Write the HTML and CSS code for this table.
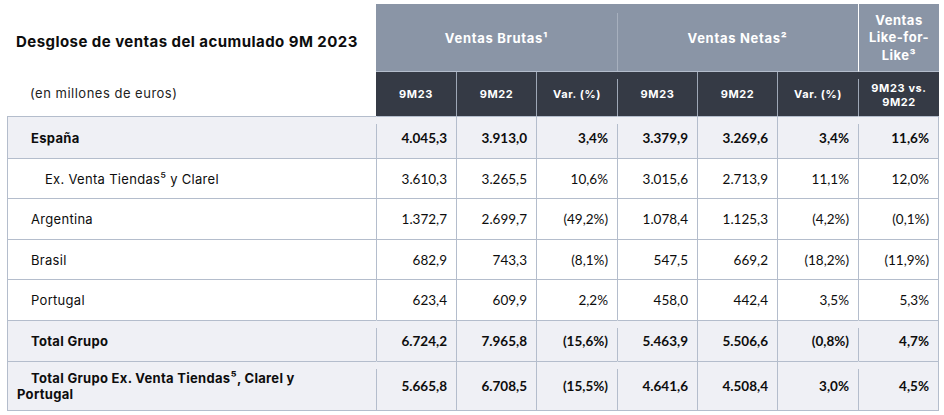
FILE: index.html
```html
<!DOCTYPE html>
<html lang="es">
<head>
<meta charset="utf-8">
<title>Desglose de ventas 9M 2023</title>
<link rel="stylesheet" href="styles.css">
</head>
<body>
<div class="sheet">
  <div class="title">Desglose de ventas del acumulado 9M 2023</div>
  <div class="grp">Ventas Brutas¹</div>
  <div class="grp grp-cut">Ventas Netas²</div>
  <div class="grp grp-lfl">Ventas<br>Like-for-<br>Like³</div>

  <div class="units">(en millones de euros)</div>
  <div class="sub">9M23</div>
  <div class="sub">9M22</div>
  <div class="sub">Var. (%)</div>
  <div class="sub sub-cut">9M23</div>
  <div class="sub">9M22</div>
  <div class="sub">Var. (%)</div>
  <div class="sub sub-cut sub-two">9M23 vs.<br>9M22</div>

  <div class="lab shade bold">España</div>
  <div class="num shade bold cut">4.045,3</div>
  <div class="num shade bold">3.913,0</div>
  <div class="num shade bold">3,4%</div>
  <div class="num shade bold cut">3.379,9</div>
  <div class="num shade bold">3.269,6</div>
  <div class="num shade bold">3,4%</div>
  <div class="num shade bold cut last">11,6%</div>

  <div class="lab deep">Ex. Venta Tiendas⁵ y Clarel</div>
  <div class="num">3.610,3</div>
  <div class="num">3.265,5</div>
  <div class="num">10,6%</div>
  <div class="num">3.015,6</div>
  <div class="num">2.713,9</div>
  <div class="num">11,1%</div>
  <div class="num last">12,0%</div>

  <div class="lab">Argentina</div>
  <div class="num">1.372,7</div>
  <div class="num">2.699,7</div>
  <div class="num">(49,2%)</div>
  <div class="num">1.078,4</div>
  <div class="num">1.125,3</div>
  <div class="num">(4,2%)</div>
  <div class="num last">(0,1%)</div>

  <div class="lab">Brasil</div>
  <div class="num">682,9</div>
  <div class="num">743,3</div>
  <div class="num">(8,1%)</div>
  <div class="num">547,5</div>
  <div class="num">669,2</div>
  <div class="num">(18,2%)</div>
  <div class="num last">(11,9%)</div>

  <div class="lab">Portugal</div>
  <div class="num">623,4</div>
  <div class="num">609,9</div>
  <div class="num">2,2%</div>
  <div class="num">458,0</div>
  <div class="num">442,4</div>
  <div class="num">3,5%</div>
  <div class="num last">5,3%</div>

  <div class="lab shade bold">Total Grupo</div>
  <div class="num shade bold cut">6.724,2</div>
  <div class="num shade bold">7.965,8</div>
  <div class="num shade bold">(15,6%)</div>
  <div class="num shade bold cut">5.463,9</div>
  <div class="num shade bold">5.506,6</div>
  <div class="num shade bold">(0,8%)</div>
  <div class="num shade bold cut last">4,7%</div>

  <div class="lab shade bold wrap bottom">Total Grupo Ex. Venta Tiendas⁵, Clarel y<br>Portugal</div>
  <div class="num shade bold cut bottom">5.665,8</div>
  <div class="num shade bold bottom">6.708,5</div>
  <div class="num shade bold bottom">(15,5%)</div>
  <div class="num shade bold cut bottom">4.641,6</div>
  <div class="num shade bold bottom">4.508,4</div>
  <div class="num shade bold bottom">3,0%</div>
  <div class="num shade bold cut last bottom">4,5%</div>
</div>
</body>
</html>
```

FILE: styles.css
```css
:root {
  --line: #b4bdcc;
  --head: #8a95a6;
  --dark: #353a45;
  --shade: #eff0f5;
  --ink: #0d0d0d;
}

* { box-sizing: border-box; }

body {
  margin: 0;
  background: #fff;
  color: var(--ink);
  font-family: "Inter", "Open Sans", sans-serif;
}

.sheet {
  display: grid;
  grid-template-columns: 369px 80px 80px 81px 80px 80px 81px 81px;
  grid-template-rows: 68px 44px 42px 40px 41px 40px 41px 41px 50px;
  margin: 4px 0 0 7px;
  width: 932px;
}

.title {
  display: flex;
  align-items: center;
  padding-left: 9px;
  padding-top: 6px;
  font-size: 15px;
  font-weight: 700;
  letter-spacing: 0.45px;
}

.grp {
  grid-column: span 3;
  display: flex;
  align-items: center;
  justify-content: center;
  text-align: center;
  background: var(--head);
  color: #fff;
  font-size: 13px;
  font-weight: 700;
  letter-spacing: 0.7px;
  border-bottom: 1px solid var(--line);
}

.grp-cut {
  background: linear-gradient(#a7b0be, #a7b0be) left bottom / 1px calc(100% - 9px) no-repeat border-box, var(--head);
}

.grp-lfl {
  grid-column: span 1;
  border-left: 1px solid #fff;
  line-height: 17.5px;
  padding-top: 1px;
  letter-spacing: 0.5px;
}

.units {
  display: flex;
  align-items: center;
  padding-left: 23px;
  padding-bottom: 3px;
  font-size: 13px;
  letter-spacing: 0.5px;
  color: #222;
}

.sub {
  display: flex;
  align-items: center;
  justify-content: center;
  text-align: center;
  background: var(--dark);
  color: #fff;
  font-size: 11px;
  font-weight: 700;
  letter-spacing: 0.6px;
  border-left: 1px solid #9ea7b6;
  line-height: 14px;
}

.sub:nth-child(6) { border-left: 0; }

.sub-cut {
  border-left: 1px solid transparent;
  background: linear-gradient(#9ea7b6, #9ea7b6) left bottom / 1px calc(100% - 7px) no-repeat border-box, var(--dark);
}

.sub-two { padding-top: 2px; }

.lab,
.num {
  display: flex;
  align-items: center;
  border-top: 1px solid var(--line);
  border-left: 1px solid var(--line);
  background: #fff;
}

.lab {
  padding-left: 23px;
  font-size: 13px;
  letter-spacing: 0.3px;
}

.deep { padding-left: 37px; }

.num {
  justify-content: flex-end;
  padding-right: 9px;
  font-family: "Lato", "Liberation Sans", sans-serif;
  font-size: 13.5px;
}

.bold { font-weight: 700; }

.shade { background: var(--shade); }

.num.cut {
  border-left: 1px solid transparent;
  background: linear-gradient(var(--line), var(--line)) left bottom / 1px calc(100% - 8px) no-repeat border-box, var(--shade);
}

.last { border-right: 1px solid var(--line); }

.bottom { border-bottom: 1px solid var(--line); }

.wrap {
  display: block;
  padding-left: 9px;
  padding-top: 8px;
  text-indent: 14px;
  line-height: 16px;
}
```
